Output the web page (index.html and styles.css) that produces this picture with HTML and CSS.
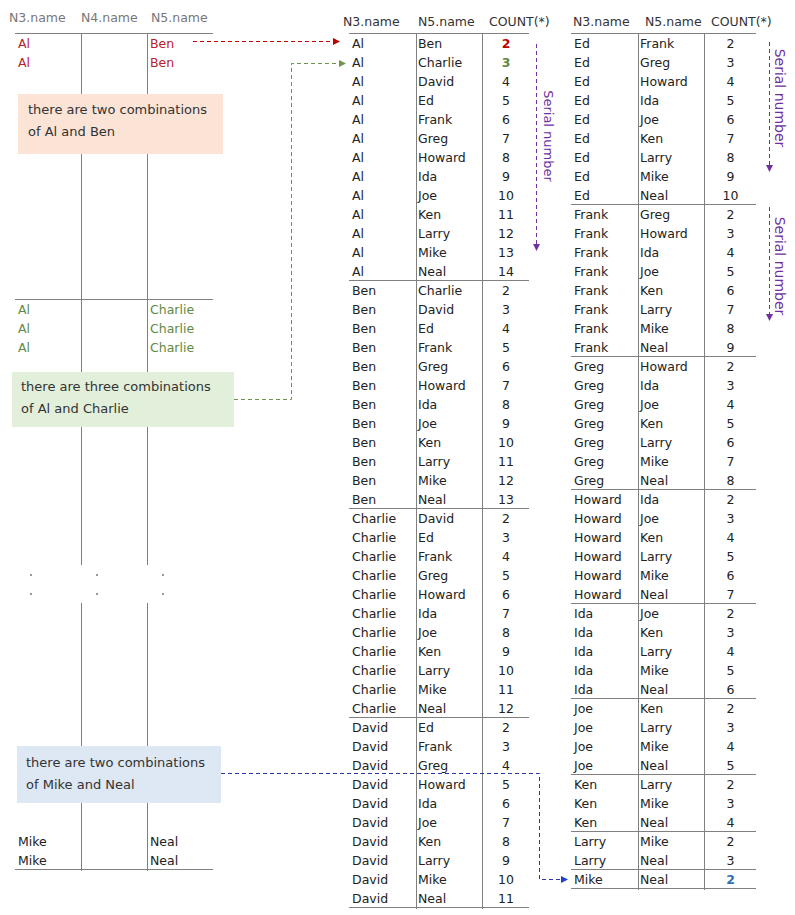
FILE: index.html
```html
<!DOCTYPE html>
<html lang="en">

<head>
  <meta charset="UTF-8">
  <meta name="viewport" content="width=device-width, initial-scale=1.0">
  <title>Combinations</title>
  <link rel="stylesheet" href="styles.css">
</head>

<body>

  <div class="canvas">

    <!-- source rows -->
    <div class="left">
      <div class="ltable">
        <div class="lhead">
          <span class="h1">N3.name</span><span class="h2">N4.name</span><span class="h3">N5.name</span>
        </div>
        <div class="lgroup">
          <div class="lrow red"><span>Al</span><span></span><span>Ben</span></div>
          <div class="lrow red"><span>Al</span><span></span><span>Ben</span></div>
          <div class="lrow fill1"><span></span><span></span><span></span></div>
        </div>
        <div class="lgroup">
          <div class="lrow green"><span>Al</span><span></span><span>Charlie</span></div>
          <div class="lrow green"><span>Al</span><span></span><span>Charlie</span></div>
          <div class="lrow green"><span>Al</span><span></span><span>Charlie</span></div>
          <div class="lrow fill2"><span></span><span></span><span></span></div>
          <div class="lrow dots"><i></i><i></i><i></i></div>
          <div class="lrow dots"><i></i><i></i><i></i></div>
          <div class="lrow fill1"><span></span><span></span><span></span></div>
          <div class="lrow"><span>Mike</span><span></span><span>Neal</span></div>
          <div class="lrow"><span>Mike</span><span></span><span>Neal</span></div>
        </div>
      </div>

      <div class="note note-red">there are two combinations<br>of Al and Ben</div>
      <div class="note note-green">there are three combinations<br>of Al and Charlie</div>
      <div class="note note-blue">there are two combinations<br>of Mike and Neal</div>
    </div>

    <!-- grouped result, part 1 -->
    <div class="tbl mid">
      <div class="thead"><span>N3.name</span><span>N5.name</span><span>COUNT(*)</span></div>
      <div class="tbody">
        <div class="grp">
          <div class="row"><span>Al</span><span>Ben</span><span class="n red-b">2</span></div>
          <div class="row"><span>Al</span><span>Charlie</span><span class="n green-b">3</span></div>
          <div class="row"><span>Al</span><span>David</span><span class="n">4</span></div>
          <div class="row"><span>Al</span><span>Ed</span><span class="n">5</span></div>
          <div class="row"><span>Al</span><span>Frank</span><span class="n">6</span></div>
          <div class="row"><span>Al</span><span>Greg</span><span class="n">7</span></div>
          <div class="row"><span>Al</span><span>Howard</span><span class="n">8</span></div>
          <div class="row"><span>Al</span><span>Ida</span><span class="n">9</span></div>
          <div class="row"><span>Al</span><span>Joe</span><span class="n">10</span></div>
          <div class="row"><span>Al</span><span>Ken</span><span class="n">11</span></div>
          <div class="row"><span>Al</span><span>Larry</span><span class="n">12</span></div>
          <div class="row"><span>Al</span><span>Mike</span><span class="n">13</span></div>
          <div class="row"><span>Al</span><span>Neal</span><span class="n">14</span></div>
        </div>
        <div class="grp">
          <div class="row"><span>Ben</span><span>Charlie</span><span class="n">2</span></div>
          <div class="row"><span>Ben</span><span>David</span><span class="n">3</span></div>
          <div class="row"><span>Ben</span><span>Ed</span><span class="n">4</span></div>
          <div class="row"><span>Ben</span><span>Frank</span><span class="n">5</span></div>
          <div class="row"><span>Ben</span><span>Greg</span><span class="n">6</span></div>
          <div class="row"><span>Ben</span><span>Howard</span><span class="n">7</span></div>
          <div class="row"><span>Ben</span><span>Ida</span><span class="n">8</span></div>
          <div class="row"><span>Ben</span><span>Joe</span><span class="n">9</span></div>
          <div class="row"><span>Ben</span><span>Ken</span><span class="n">10</span></div>
          <div class="row"><span>Ben</span><span>Larry</span><span class="n">11</span></div>
          <div class="row"><span>Ben</span><span>Mike</span><span class="n">12</span></div>
          <div class="row"><span>Ben</span><span>Neal</span><span class="n">13</span></div>
        </div>
        <div class="grp">
          <div class="row"><span>Charlie</span><span>David</span><span class="n">2</span></div>
          <div class="row"><span>Charlie</span><span>Ed</span><span class="n">3</span></div>
          <div class="row"><span>Charlie</span><span>Frank</span><span class="n">4</span></div>
          <div class="row"><span>Charlie</span><span>Greg</span><span class="n">5</span></div>
          <div class="row"><span>Charlie</span><span>Howard</span><span class="n">6</span></div>
          <div class="row"><span>Charlie</span><span>Ida</span><span class="n">7</span></div>
          <div class="row"><span>Charlie</span><span>Joe</span><span class="n">8</span></div>
          <div class="row"><span>Charlie</span><span>Ken</span><span class="n">9</span></div>
          <div class="row"><span>Charlie</span><span>Larry</span><span class="n">10</span></div>
          <div class="row"><span>Charlie</span><span>Mike</span><span class="n">11</span></div>
          <div class="row"><span>Charlie</span><span>Neal</span><span class="n">12</span></div>
        </div>
        <div class="grp">
          <div class="row"><span>David</span><span>Ed</span><span class="n">2</span></div>
          <div class="row"><span>David</span><span>Frank</span><span class="n">3</span></div>
          <div class="row"><span>David</span><span>Greg</span><span class="n">4</span></div>
          <div class="row"><span>David</span><span>Howard</span><span class="n">5</span></div>
          <div class="row"><span>David</span><span>Ida</span><span class="n">6</span></div>
          <div class="row"><span>David</span><span>Joe</span><span class="n">7</span></div>
          <div class="row"><span>David</span><span>Ken</span><span class="n">8</span></div>
          <div class="row"><span>David</span><span>Larry</span><span class="n">9</span></div>
          <div class="row"><span>David</span><span>Mike</span><span class="n">10</span></div>
          <div class="row"><span>David</span><span>Neal</span><span class="n">11</span></div>
        </div>
      </div>
    </div>

    <!-- grouped result, part 2 -->
    <div class="tbl right">
      <div class="thead"><span>N3.name</span><span>N5.name</span><span>COUNT(*)</span></div>
      <div class="tbody">
        <div class="grp">
          <div class="row"><span>Ed</span><span>Frank</span><span class="n">2</span></div>
          <div class="row"><span>Ed</span><span>Greg</span><span class="n">3</span></div>
          <div class="row"><span>Ed</span><span>Howard</span><span class="n">4</span></div>
          <div class="row"><span>Ed</span><span>Ida</span><span class="n">5</span></div>
          <div class="row"><span>Ed</span><span>Joe</span><span class="n">6</span></div>
          <div class="row"><span>Ed</span><span>Ken</span><span class="n">7</span></div>
          <div class="row"><span>Ed</span><span>Larry</span><span class="n">8</span></div>
          <div class="row"><span>Ed</span><span>Mike</span><span class="n">9</span></div>
          <div class="row"><span>Ed</span><span>Neal</span><span class="n">10</span></div>
        </div>
        <div class="grp">
          <div class="row"><span>Frank</span><span>Greg</span><span class="n">2</span></div>
          <div class="row"><span>Frank</span><span>Howard</span><span class="n">3</span></div>
          <div class="row"><span>Frank</span><span>Ida</span><span class="n">4</span></div>
          <div class="row"><span>Frank</span><span>Joe</span><span class="n">5</span></div>
          <div class="row"><span>Frank</span><span>Ken</span><span class="n">6</span></div>
          <div class="row"><span>Frank</span><span>Larry</span><span class="n">7</span></div>
          <div class="row"><span>Frank</span><span>Mike</span><span class="n">8</span></div>
          <div class="row"><span>Frank</span><span>Neal</span><span class="n">9</span></div>
        </div>
        <div class="grp">
          <div class="row"><span>Greg</span><span>Howard</span><span class="n">2</span></div>
          <div class="row"><span>Greg</span><span>Ida</span><span class="n">3</span></div>
          <div class="row"><span>Greg</span><span>Joe</span><span class="n">4</span></div>
          <div class="row"><span>Greg</span><span>Ken</span><span class="n">5</span></div>
          <div class="row"><span>Greg</span><span>Larry</span><span class="n">6</span></div>
          <div class="row"><span>Greg</span><span>Mike</span><span class="n">7</span></div>
          <div class="row"><span>Greg</span><span>Neal</span><span class="n">8</span></div>
        </div>
        <div class="grp">
          <div class="row"><span>Howard</span><span>Ida</span><span class="n">2</span></div>
          <div class="row"><span>Howard</span><span>Joe</span><span class="n">3</span></div>
          <div class="row"><span>Howard</span><span>Ken</span><span class="n">4</span></div>
          <div class="row"><span>Howard</span><span>Larry</span><span class="n">5</span></div>
          <div class="row"><span>Howard</span><span>Mike</span><span class="n">6</span></div>
          <div class="row"><span>Howard</span><span>Neal</span><span class="n">7</span></div>
        </div>
        <div class="grp">
          <div class="row"><span>Ida</span><span>Joe</span><span class="n">2</span></div>
          <div class="row"><span>Ida</span><span>Ken</span><span class="n">3</span></div>
          <div class="row"><span>Ida</span><span>Larry</span><span class="n">4</span></div>
          <div class="row"><span>Ida</span><span>Mike</span><span class="n">5</span></div>
          <div class="row"><span>Ida</span><span>Neal</span><span class="n">6</span></div>
        </div>
        <div class="grp">
          <div class="row"><span>Joe</span><span>Ken</span><span class="n">2</span></div>
          <div class="row"><span>Joe</span><span>Larry</span><span class="n">3</span></div>
          <div class="row"><span>Joe</span><span>Mike</span><span class="n">4</span></div>
          <div class="row"><span>Joe</span><span>Neal</span><span class="n">5</span></div>
        </div>
        <div class="grp">
          <div class="row"><span>Ken</span><span>Larry</span><span class="n">2</span></div>
          <div class="row"><span>Ken</span><span>Mike</span><span class="n">3</span></div>
          <div class="row"><span>Ken</span><span>Neal</span><span class="n">4</span></div>
        </div>
        <div class="grp">
          <div class="row"><span>Larry</span><span>Mike</span><span class="n">2</span></div>
          <div class="row"><span>Larry</span><span>Neal</span><span class="n">3</span></div>
        </div>
        <div class="grp">
          <div class="row"><span>Mike</span><span>Neal</span><span class="n blue-b">2</span></div>
        </div>
      </div>
    </div>

    <!-- connectors -->
    <svg class="overlay" width="795" height="915" viewBox="0 0 795 915">
      <g fill="none" stroke-width="1" stroke-dasharray="4 3">
        <path d="M193 41.5H334" stroke="#c00000" />
        <path d="M234 399.5H291.5V63.5H340" stroke="#6f9350" />
        <path d="M221 773.5H539.5V879.5H562" stroke="#2a35a8" />
        <path d="M536.5 44V244" stroke="#7030a0" />
        <path d="M769.5 42V165" stroke="#7030a0" />
        <path d="M769.5 207V314" stroke="#7030a0" />
      </g>
      <polygon points="333,38 340,41.5 333,45" fill="#c00000" />
      <polygon points="339,60 346,63.5 339,67" fill="#6f9350" />
      <polygon points="561,876 568,879.5 561,883" fill="#1f3fd0" />
      <polygon points="533,244 540,244 536.5,251" fill="#7030a0" />
      <polygon points="766,165 773,165 769.5,172" fill="#7030a0" />
      <polygon points="766,314 773,314 769.5,321" fill="#7030a0" />
      <g class="serial">
        <text transform="translate(544 136) rotate(90)">Serial number</text>
        <text class="big" transform="translate(775 98) rotate(90)">Serial number</text>
        <text class="big" transform="translate(775 266) rotate(90)">Serial number</text>
      </g>
    </svg>

  </div>

</body>

</html>
```

FILE: styles.css
```css
* {
  box-sizing: border-box;
}

body {
  margin: 0;
  padding: 0;
  background: #fff;
  color: #222;
  font-family: "DejaVu Sans", Verdana, sans-serif;
  font-size: 12.5px;
}

.canvas {
  position: relative;
  width: 795px;
  height: 915px;
  display: flex;
  overflow: hidden;
}

/* left: raw rows */

.left {
  position: relative;
  width: 349px;
  flex: none;
}

.left .ltable {
  width: 198px;
  margin-left: 15px;
}

.left .lhead {
  height: 33px;
  padding-top: 8px;
  line-height: 19px;
  display: grid;
  grid-template-columns: 66px 66px 66px;
  color: #777;
  white-space: nowrap;
}

.left .lhead .h1 {
  margin-left: -6px;
}

.left .lhead .h3 {
  padding-left: 4px;
}

.left .lgroup {
  box-shadow: inset 0 1px 0 #808080;
}

.left .lgroup:last-child {
  box-shadow: inset 0 1px 0 #808080, 0 1px 0 #808080;
}

.left .lrow {
  display: grid;
  grid-template-columns: 66px 66px 66px;
  height: 19px;
  line-height: 21px;
}

.left .lrow span {
  padding-left: 3px;
  white-space: nowrap;
}

.left .lrow span + span {
  border-left: 1px solid #808080;
  padding-left: 2px;
}

.left .lrow.fill1 {
  height: 228px;
}

.left .lrow.fill2 {
  height: 209px;
}

.left .lrow.dots i {
  display: block;
  width: 2px;
  height: 2px;
  margin: 9px 0 0 15px;
  background: #999;
}

.left .lrow.red {
  color: #b8202a;
}

.left .lrow.green {
  color: #5f8a45;
}

.left .note {
  position: absolute;
  font-size: 13px;
  line-height: 22px;
  color: #333;
  white-space: nowrap;
}

.left .note-red {
  left: 18px;
  top: 94px;
  width: 205px;
  height: 60px;
  padding: 5px 0 0 10px;
  background: #fbe3d6;
}

.left .note-green {
  left: 12px;
  top: 372px;
  width: 222px;
  height: 55px;
  padding: 4px 0 0 9px;
  background: #e2efda;
}

.left .note-blue {
  left: 17px;
  top: 746px;
  width: 204px;
  height: 57px;
  padding: 6px 0 0 9px;
  background: #dde8f4;
}

/* grouped tables */

.tbl {
  flex: none;
}

.tbl.mid {
  width: 180px;
}

.tbl.right {
  width: 185px;
  margin-left: 42px;
}

.tbl .thead {
  height: 33px;
  padding-top: 12px;
  line-height: 19px;
  display: grid;
  color: #333;
  white-space: nowrap;
}

.tbl .row {
  display: grid;
  height: 19px;
  line-height: 21px;
}

.tbl.mid .thead,
.tbl.mid .row {
  grid-template-columns: 67px 66px 47px;
}

.tbl.right .thead,
.tbl.right .row {
  grid-template-columns: 67px 66px 52px;
}

.tbl.mid .thead span:nth-child(1) {
  margin-left: -6px;
}

.tbl.mid .thead span:nth-child(2) {
  padding-left: 2px;
}

.tbl.mid .thead span:nth-child(3),
.tbl.right .thead span:nth-child(2),
.tbl.right .thead span:nth-child(3) {
  padding-left: 7px;
}

.tbl.right .thead span:nth-child(1) {
  padding-left: 2px;
}

.tbl .tbody {
  box-shadow: 0 1px 0 #808080;
}

.tbl .grp {
  box-shadow: inset 0 1px 0 #808080;
}

.tbl .row span {
  padding-left: 3px;
  white-space: nowrap;
}

.tbl .row span + span {
  border-left: 1px solid #808080;
  padding-left: 1px;
}

.tbl .row .n {
  padding-left: 0;
  text-align: center;
}

.tbl .row .red-b {
  color: #c00000;
  font-weight: bold;
}

.tbl .row .green-b {
  color: #5f8a45;
  font-weight: bold;
}

.tbl .row .blue-b {
  color: #2f6db5;
  font-weight: bold;
}

/* arrows and labels */

.overlay {
  position: absolute;
  left: 0;
  top: 0;
  pointer-events: none;
}

.overlay .serial text {
  fill: #7030a0;
  font-family: "DejaVu Sans", Verdana, sans-serif;
  font-size: 13px;
  text-anchor: middle;
}

.overlay .serial text.big {
  font-size: 14px;
}
```
